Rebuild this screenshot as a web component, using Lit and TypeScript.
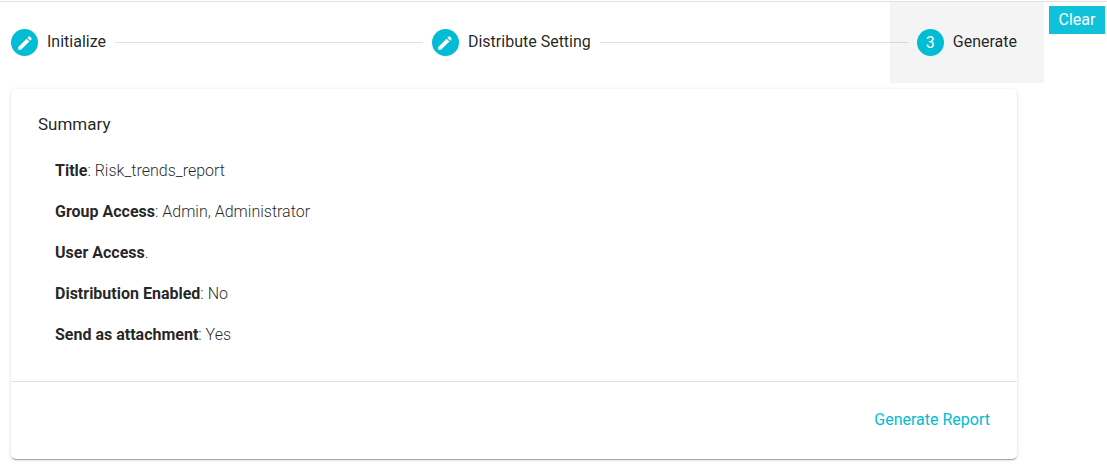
import { LitElement, html, css, svg, nothing } from "lit";
import { customElement, state } from "lit/decorators.js";

interface Step {
  label: string;
  done: boolean;
}

interface Entry {
  name: string;
  separator: string;
  value: string;
}

const pencil = svg`<path d="M3 17.25V21h3.75L17.81 9.94l-3.75-3.75L3 17.25zM20.71 7.04a1 1 0 0 0 0-1.41l-2.34-2.34a1 1 0 0 0-1.41 0l-1.83 1.83 3.75 3.75 1.83-1.83z"/>`;

@customElement("app-root")
export class AppRoot extends LitElement {
  static styles = css`
    :host {
      display: block;
      padding-top: 1px;
      font: 400 16px/24px Roboto, sans-serif;
      color: rgba(0, 0, 0, 0.87);
      background: #fff;
    }
    * {
      box-sizing: border-box;
    }
    button {
      font: inherit;
      border: 0;
      margin: 0;
      cursor: pointer;
    }
    .page {
      display: flex;
      align-items: flex-start;
      gap: 5px;
      padding-right: 2px;
      border-top: 1px solid #e0e0e0;
    }
    .stepper {
      flex: 1;
      min-width: 0;
    }
    .steps {
      display: flex;
      align-items: center;
    }
    .step {
      display: flex;
      align-items: center;
      gap: 9px;
      height: 81px;
      padding: 0 27px;
      color: inherit;
      background: none;
      white-space: nowrap;
    }
    .step:first-child {
      padding-left: 11px;
    }
    .step.current {
      background: #f4f4f4;
    }
    .label {
      padding-bottom: 2px;
    }
    .badge {
      display: grid;
      place-items: center;
      width: 27px;
      height: 27px;
      border-radius: 50%;
      color: #fff;
      background: #00bcd4;
    }
    .badge svg {
      width: 18px;
      height: 18px;
      fill: currentColor;
    }
    .line {
      flex: 1;
      z-index: 1;
      margin: 0 -18px;
      border-top: 1px solid rgba(0, 0, 0, 0.12);
    }
    .card {
      margin: 6px 27px 6px 11px;
      border-radius: 5px;
      background: #fff;
      box-shadow: 0 2px 1px -1px rgba(0, 0, 0, 0.2),
        0 1px 1px 0 rgba(0, 0, 0, 0.14), 0 1px 4px 0 rgba(0, 0, 0, 0.12);
    }
    .body {
      padding: 23px 27px 34px;
    }
    .title {
      margin: 0;
      font-size: 17px;
      font-weight: 400;
      line-height: 24px;
    }
    .entries {
      display: grid;
      gap: 17px;
      margin: 0;
      padding: 23px 17px 0;
      font-weight: 300;
      list-style: none;
    }
    .name {
      font-weight: 700;
    }
    .footer {
      display: flex;
      justify-content: flex-end;
      padding: 20px 27px 22px;
      border-top: 1px solid #e0e0e0;
    }
    .generate {
      height: 35px;
      padding: 0;
      color: #00bcd4;
      background: none;
    }
    .clear {
      width: 56px;
      height: 28px;
      margin-top: 4px;
      padding: 0;
      line-height: 28px;
      color: #fff;
      background: #0fc2d9;
    }
  `;

  @state() private current = 2;

  private steps: Step[] = [
    { label: "Initialize", done: true },
    { label: "Distribute Setting", done: true },
    { label: "Generate", done: false },
  ];

  private entries: Entry[] = [
    { name: "Title", separator: ": ", value: "Risk_trends_report" },
    { name: "Group Access", separator: ": ", value: "Admin, Administrator" },
    { name: "User Access", separator: ".", value: "" },
    { name: "Distribution Enabled", separator: ": ", value: "No" },
    { name: "Send as attachment", separator: ": ", value: "Yes" },
  ];

  render() {
    return html`
      <div class="page">
        <main class="stepper">
          <nav class="steps" aria-label="Steps">
            ${this.steps.map(
              (step, i) => html`${i ? html`<span class="line"></span>` : nothing}<button
                  class="step ${i === this.current ? "current" : ""}"
                  type="button"
                  aria-current=${i === this.current ? "step" : "false"}
                  @click=${() => (this.current = i)}
                >
                  <span class="badge"
                    >${step.done
                      ? html`<svg viewBox="0 0 24 24" aria-hidden="true">${pencil}</svg>`
                      : i + 1}</span
                  ><span class="label">${step.label}</span>
                </button>`
            )}
          </nav>
          <section class="card">
            <div class="body">
              <h2 class="title">Summary</h2>
              <ul class="entries">
                ${this.entries.map(
                  (e) => html`<li><span class="name">${e.name}</span>${e.separator}${e.value}</li>`
                )}
              </ul>
            </div>
            <div class="footer">
              <button class="generate" type="button">Generate Report</button>
            </div>
          </section>
        </main>
        <button class="clear" type="button">Clear</button>
      </div>
    `;
  }
}
